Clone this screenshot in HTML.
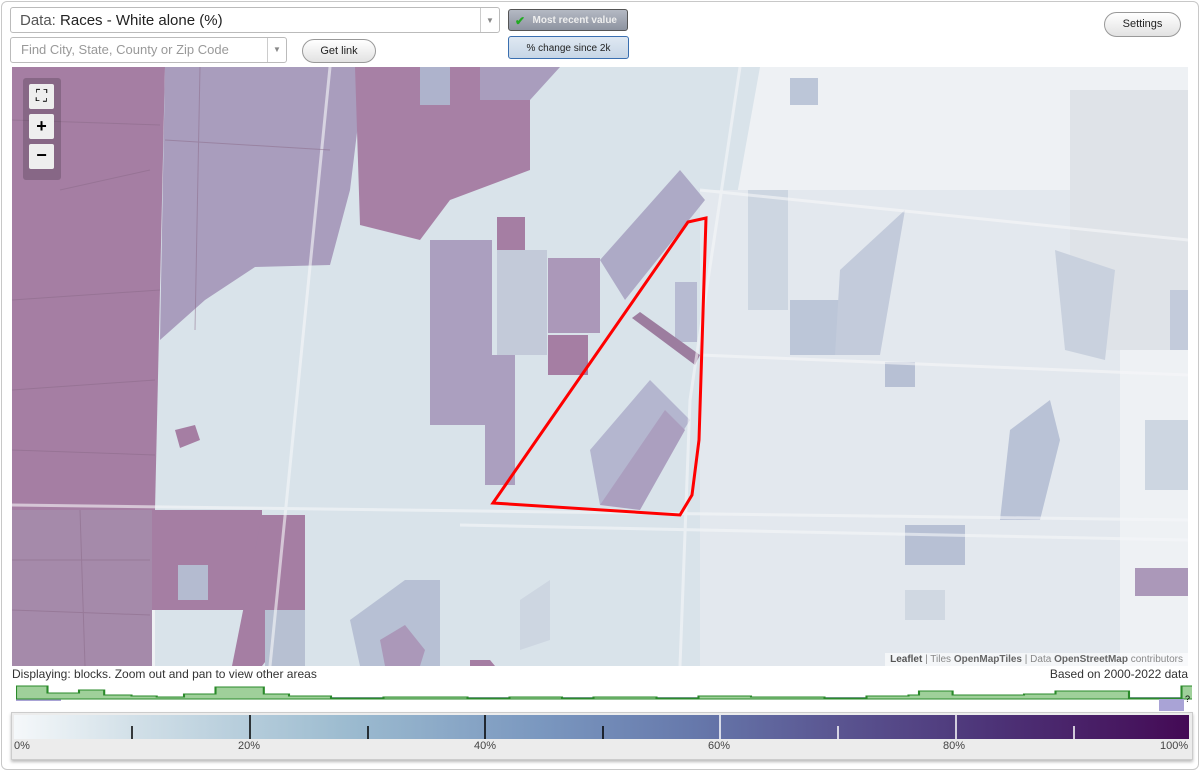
<!DOCTYPE html>
<html><head><style>
body{margin:0;width:1200px;height:771px;background:#fff;font-family:"Liberation Sans",sans-serif;position:relative;overflow:hidden}
.frame{position:absolute;left:1px;top:1px;width:1196px;height:767px;border:1px solid #c8c8c8;border-radius:6px}
.sel{position:absolute;left:10px;top:7px;width:490px;height:26px;border:1px solid #bbb;border-radius:3px;background:#fff;font-size:15px;line-height:26px;box-sizing:border-box;padding-left:9px;color:#222}
.sel .arr,.find .arr{position:absolute;right:0;top:0;width:18px;height:100%;border-left:1px solid #ccc;color:#888;font-size:8px;text-align:center}
.find{position:absolute;left:10px;top:37px;width:277px;height:26px;border:1px solid #bbb;border-radius:3px;background:#fff;font-size:13px;line-height:24px;box-sizing:border-box;padding-left:10px;color:#999}
.btn{position:absolute;border:1px solid #999;border-radius:13px;background:linear-gradient(#fff,#e2e2e2);font-size:11px;text-align:center;color:#222}
.map{position:absolute;left:12px;top:67px;width:1176px;height:599px;overflow:hidden;background:#eef1f4}
</style></head><body>
<div class="frame"></div>
<div class="sel"><span style="color:#555">Data:</span> Races - White alone (%)<div class="arr" style="line-height:26px">▼</div></div>
<div class="find">Find City, State, County or Zip Code<div class="arr" style="line-height:24px">▼</div></div>
<div class="btn" style="left:302px;top:39px;width:72px;height:22px;line-height:22px">Get link</div>
<div style="position:absolute;left:508px;top:9px;width:120px;height:22px;border:1px solid #555;border-radius:3px;background:linear-gradient(#b4b9c3,#8d93a0);color:#eee;font-size:10px;font-weight:bold;line-height:22px;text-align:right;padding-right:10px;box-sizing:border-box"><span style="position:absolute;left:6px;top:0;color:#2a2;font-size:12px">✔</span>Most recent value</div>
<div style="position:absolute;left:508px;top:36px;width:121px;height:23px;border:1px solid #3a6fb0;border-radius:3px;background:linear-gradient(#dfe8f2,#c7d6e6);font-size:10px;line-height:23px;text-align:center;color:#222;box-sizing:border-box">% change since 2k</div>
<div class="btn" style="left:1104px;top:12px;width:75px;height:23px;line-height:23px">Settings</div>

<div class="map">
<svg width="1176" height="599" viewBox="12 67 1176 599">
<rect x="12" y="67" width="1176" height="599" fill="#eef1f4"/>
<path d="M155 67 L760 67 L700 400 L700 666 L155 666Z" fill="#d9e3ea"/>
<rect x="700" y="190" width="420" height="480" fill="#e3e8ee"/>
<rect x="1070" y="90" width="118" height="260" fill="#dfe3e8"/>
<path d="M12 67 L165 67 L155 510 L12 510Z" fill="#a57ea3"/>
<path d="M165 67 L365 67 L350 190 L330 265 L255 267 L205 300 L160 340Z" fill="#a99dbd"/>
<path d="M355 67 L530 67 L530 170 L450 200 L420 240 L360 225Z" fill="#a780a5"/>
<path d="M420 67 L450 67 L450 105 L420 105Z" fill="#aeb3cc"/>
<path d="M480 67 L560 67 L530 100 L480 100Z" fill="#a99dbd"/>
<rect x="12" y="510" width="140" height="156" fill="#a58aaa"/>
<rect x="152" y="510" width="110" height="100" fill="#a57ea3"/>
<path d="M262 515 L305 515 L305 610 L262 666 L232 666Z" fill="#a57ea3"/>
<rect x="178" y="565" width="30" height="35" fill="#b4bbd0"/>
<rect x="265" y="610" width="40" height="56" fill="#b7c0d2"/>
<rect x="497" y="217" width="28" height="33" fill="#a57ea3"/>
<rect x="430" y="240" width="62" height="185" fill="#ab9fbf"/>
<rect x="497" y="250" width="50" height="105" fill="#c3cad9"/>
<rect x="548" y="258" width="52" height="75" fill="#ab98b9"/>
<rect x="548" y="335" width="40" height="40" fill="#a57ea3"/>
<rect x="485" y="355" width="30" height="130" fill="#ab9fbf"/>
<path d="M600 260 L680 170 L705 200 L625 300Z" fill="#adaac6"/>
<path d="M590 450 L650 380 L690 420 L640 500 L600 505Z" fill="#b4b6cf"/>
<path d="M600 505 L665 410 L685 430 L640 510Z" fill="#ab9fbf"/>
<rect x="675" y="282" width="22" height="60" fill="#b7bbd2"/>
<path d="M632 318 L640 312 L700 355 L695 365Z" fill="#9c7d9f"/>
<rect x="748" y="190" width="40" height="120" fill="#cdd6e1"/>
<rect x="790" y="300" width="50" height="55" fill="#bcc6d8"/>
<path d="M840 270 L905 210 L880 355 L835 355Z" fill="#c3cbdb"/>
<rect x="885" y="362" width="30" height="25" fill="#b7c0d4"/>
<rect x="790" y="78" width="28" height="27" fill="#bcc6d8"/>
<path d="M1055 250 L1115 270 L1105 360 L1065 350Z" fill="#c9d1de"/>
<rect x="1170" y="290" width="18" height="60" fill="#c3cbdb"/>
<path d="M1010 430 L1050 400 L1060 440 L1040 520 L1000 520Z" fill="#b9c2d6"/>
<rect x="905" y="525" width="60" height="40" fill="#b7c0d4"/>
<rect x="1145" y="420" width="43" height="70" fill="#cdd6e1"/>
<rect x="1135" y="568" width="53" height="28" fill="#ab98b9"/>
<rect x="905" y="590" width="40" height="30" fill="#d0d8e2"/>
<path d="M350 620 L405 580 L440 580 L440 666 L360 666Z" fill="#b7c0d4"/>
<path d="M380 640 L405 625 L425 650 L420 666 L385 666Z" fill="#ab98b9"/>
<path d="M470 660 L490 660 L495 666 L470 666Z" fill="#a57ea3"/>
<path d="M520 600 L550 580 L550 640 L520 650Z" fill="#cdd6e1"/>
<path d="M175 430 L195 425 L200 440 L180 448Z" fill="#a57ea3"/>
<g stroke="#f6f7f9" stroke-width="3" fill="none" opacity=".6">
<path d="M12 505 L1188 520"/><path d="M460 525 L1188 540"/>
<path d="M700 190 L1188 240"/><path d="M700 355 L1188 375"/>
<path d="M740 67 L690 400 L680 666"/>
<path d="M330 67 L270 666"/>
</g>
<g stroke="#8a6a88" stroke-width="1" fill="none" opacity=".5">
<path d="M12 120 L160 125"/><path d="M12 300 L160 290"/><path d="M60 190 L150 170"/><path d="M12 390 L155 380"/>
<path d="M165 140 L330 150"/><path d="M200 67 L195 330"/><path d="M12 450 L155 455"/>
<path d="M12 560 L150 560"/><path d="M12 610 L150 615"/><path d="M80 510 L85 666"/>
</g>
<path d="M493 503 L540 435 L688 222 L706 218 L699 440 L692 495 L680 515Z" fill="none" stroke="#f00" stroke-width="3"/>
</svg>
<div style="position:absolute;left:11px;top:11px;width:38px;height:102px;background:rgba(80,60,80,.35);border-radius:3px"></div>
<div style="position:absolute;left:17px;top:17px;width:25px;height:25px;background:#eee;border-radius:2px;text-align:center;font-size:16px;line-height:25px">⛶</div>
<div style="position:absolute;left:17px;top:47px;width:25px;height:25px;background:#eee;border-radius:2px;text-align:center;font-size:18px;font-weight:bold;line-height:25px">+</div>
<div style="position:absolute;left:17px;top:77px;width:25px;height:25px;background:#eee;border-radius:2px;text-align:center;font-size:18px;font-weight:bold;line-height:23px">−</div>
<div style="position:absolute;right:0;bottom:0;background:rgba(255,255,255,.6);font-size:10px;color:#888;padding:1px 5px"><b style="color:#555">Leaflet</b> | Tiles <b style="color:#666">OpenMapTiles</b> | Data <b style="color:#666">OpenStreetMap</b> contributors</div>
</div>

<div style="position:absolute;left:12px;top:667px;font-size:12px;color:#333">Displaying: blocks. Zoom out and pan to view other areas</div>
<div style="position:absolute;right:12px;top:667px;font-size:12px;color:#333">Based on 2000-2022 data</div>
<svg style="position:absolute;left:16px;top:684px" width="1176" height="30">
<rect x="0" y="13" width="1176" height="2" fill="#a9a3d6"/>
<rect x="0" y="13" width="45" height="4" fill="#a9a3d6"/>
<path d="M0 2 L15 2 L15 9 L30 9 L30 6 L42 6 L42 11 L55 11 L55 12 L67 12 L67 13 L80 13 L80 10 L95 10 L95 3 L118 3 L118 10 L130 10 L130 12 L150 12 L150 14 L175 14 L175 13 L215 13 L215 14 L235 14 L235 13 L260 13 L260 14 L275 14 L275 13 L305 13 L305 14 L325 14 L325 12 L350 12 L350 13 L385 13 L385 14 L405 14 L405 12 L425 12 L425 11 L430 11 L430 7 L446 7 L446 11 L480 11 L480 10 L495 10 L495 7 L530 7 L530 14 L555 14 L555 2 L570 2 L570 15 L0 15Z" fill="#9fd09a" stroke="#2a8a2a" stroke-width="1" transform="scale(2.1,1)"/>
<rect x="1143" y="15" width="25" height="12" fill="#a9a3d6"/>
<text x="1169" y="18" font-size="9" font-family="Liberation Sans">?</text>
</svg>
<div style="position:absolute;left:11px;top:712px;width:1180px;height:46px;background:#ececec;border:1px solid #ccc;box-shadow:0 2px 3px #bbb"></div>
<div style="position:absolute;left:14px;top:715px;width:1175px;height:24px;background:linear-gradient(90deg,#f5f8fa,#d2e0e8 10%,#9dbcd0 28%,#7a97bf 45%,#6678ab 58%,#5a5591 70%,#4d3478 83%,#440a55)"></div>
<svg style="position:absolute;left:14px;top:715px" width="1176" height="24">
<g stroke-width="1.5"><line x1="118" y1="11" x2="118" y2="24" stroke="#000"/><line x1="236" y1="0" x2="236" y2="24" stroke="#000"/><line x1="354" y1="11" x2="354" y2="24" stroke="#000"/><line x1="471" y1="0" x2="471" y2="24" stroke="#000"/><line x1="589" y1="11" x2="589" y2="24" stroke="#000"/><line x1="706" y1="0" x2="706" y2="24" stroke="#fff"/><line x1="824" y1="11" x2="824" y2="24" stroke="#fff"/><line x1="942" y1="0" x2="942" y2="24" stroke="#fff"/><line x1="1060" y1="11" x2="1060" y2="24" stroke="#fff"/></g></svg>
<div style="position:absolute;top:740px;left:14px;font-size:11px;color:#444">0%</div>
<div style="position:absolute;top:740px;left:238px;font-size:11px;color:#444">20%</div>
<div style="position:absolute;top:740px;left:474px;font-size:11px;color:#444">40%</div>
<div style="position:absolute;top:740px;left:708px;font-size:11px;color:#444">60%</div>
<div style="position:absolute;top:740px;left:943px;font-size:11px;color:#444">80%</div>
<div style="position:absolute;top:740px;left:1160px;font-size:11px;color:#444">100%</div>
</body></html>
